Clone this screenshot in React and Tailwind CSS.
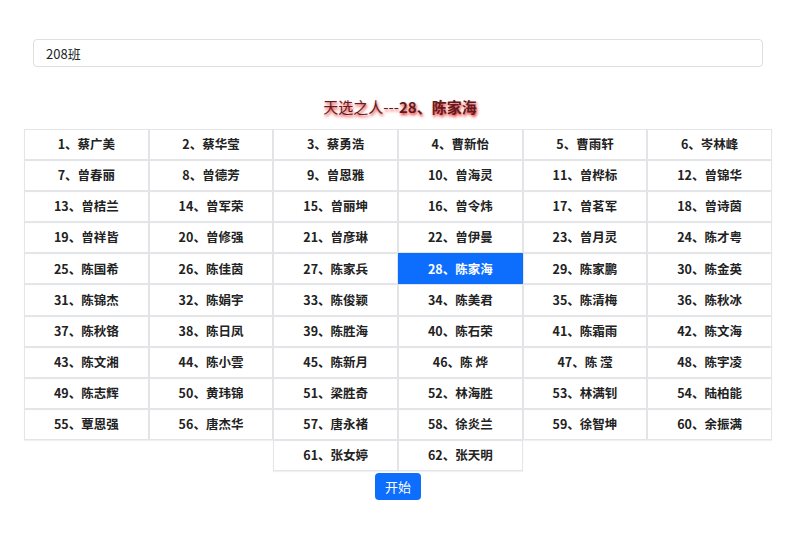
import React, { useState } from "react";

const names = [
  "蔡广美", "蔡华莹", "蔡勇浩", "曹新怡", "曹雨轩", "岑林峰",
  "曾春丽", "曾德芳", "曾恩雅", "曾海灵", "曾桦标", "曾锦华",
  "曾桔兰", "曾军荣", "曾丽坤", "曾令炜", "曾茗军", "曾诗茵",
  "曾祥皆", "曾修强", "曾彦琳", "曾伊曼", "曾月灵", "陈才粤",
  "陈国希", "陈佳茵", "陈家兵", "陈家海", "陈家鹏", "陈金英",
  "陈锦杰", "陈娟宇", "陈俊颖", "陈美君", "陈清梅", "陈秋冰",
  "陈秋铬", "陈日凤", "陈胜海", "陈石荣", "陈霜雨", "陈文海",
  "陈文湘", "陈小雲", "陈新月", "陈 烨", "陈 滢", "陈宇凌",
  "陈志辉", "黄玮锦", "梁胜奇", "林海胜", "林满钊", "陆柏能",
  "覃恩强", "唐杰华", "唐永褚", "徐炎兰", "徐智坤", "余振满",
  "张女婷", "张天明",
];

export default function App() {
  const [picked] = useState(28);

  return (
    <div className="w-[800px] h-[554px] bg-white font-['Noto_Sans_CJK_SC','Noto_Sans',sans-serif] text-[#212529]">
      <div className="pt-[39px] px-[33px] pr-[37px]">
        <input
          defaultValue="208班"
          className="w-full h-[28px] px-[12px] text-[13px] border border-[#dcdfe3] rounded-[4px] outline-none"
        />
      </div>

      <div className="mt-[29px] text-center text-[15px] leading-[22px] text-[#5b1d22] [text-shadow:1px_2px_3px_#f21c1c]">
        天选之人---<span className="font-bold">{picked}、{names[picked - 1]}</span>
      </div>

      <div className="mt-[11px] ml-[24px] w-[748px] flex flex-wrap justify-center">
        {names.map((n, i) => {
          const on = i + 1 === picked;
          return (
            <div
              key={i}
              className={`w-[124.66px] h-[31.1px] flex items-center justify-center text-[12.5px] font-bold border shadow-[0_1px_1px_rgba(0,0,0,0.06)] ${
                on ? "bg-[#0d6efd] border-[#0d6efd] text-white" : "border-[#e3e5e8] text-[#222]"
              }`}
            >
              {i + 1}、{n}
            </div>
          );
        })}
      </div>

      <div className="mt-[2px] flex justify-center">
        <button className="h-[27px] px-[10px] ml-[-4px] text-[13px] text-white bg-[#0d6efd] rounded-[4px]">
          开始
        </button>
      </div>
    </div>
  );
}
